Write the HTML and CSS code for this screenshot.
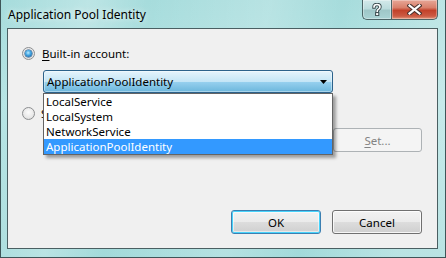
FILE: index.html
```html
<!DOCTYPE html>
<html>
<head>
<meta charset="utf-8">
<link rel="stylesheet" href="styles.css">
</head>
<body>
<div class="window">
  <div class="titlebar">
    <span class="title">Application Pool Identity</span>
    <div class="caption-buttons">
      <div class="cap help">
        <svg width="10" height="13" viewBox="0 0 10 13"><path d="M2 4 Q2 1.5 5 1.5 Q8 1.5 8 4 Q8 5.5 6.3 6.4 Q5.2 7 5.2 8.3" fill="none" stroke="#3a4a4e" stroke-width="3.4" stroke-linecap="square"/><path d="M2 4 Q2 1.5 5 1.5 Q8 1.5 8 4 Q8 5.5 6.3 6.4 Q5.2 7 5.2 8.3" fill="none" stroke="#fff" stroke-width="1.6" stroke-linecap="square"/><rect x="3.6" y="9.6" width="3.2" height="3" fill="#fff" stroke="#3a4a4e" stroke-width="1"/></svg>
      </div>
      <div class="cap close">
        <svg width="15" height="11" viewBox="0 0 15 11"><path d="M2.5 1.5 L12.5 9.5 M12.5 1.5 L2.5 9.5" stroke="#4a3430" stroke-width="4.2" stroke-linecap="square"/><path d="M2.5 1.5 L12.5 9.5 M12.5 1.5 L2.5 9.5" stroke="#fff" stroke-width="2.2" stroke-linecap="square"/></svg>
      </div>
    </div>
  </div>
  <div class="client">
    <div class="radio-row first">
      <span class="radio checked"></span>
      <span class="label"><u>B</u>uilt-in account:</span>
    </div>
    <div class="combo-wrap">
      <div class="combo">
        <span>ApplicationPoolIdentity</span>
        <svg class="arrow" width="7" height="4" viewBox="0 0 7 4"><path d="M0 0 H7 L3.5 4 Z" fill="#000"/></svg>
      </div>
      <ul class="list">
        <li>LocalService</li>
        <li>LocalSystem</li>
        <li>NetworkService</li>
        <li class="selected">ApplicationPoolIdentity</li>
      </ul>
    </div>
    <div class="radio-row second">
      <span class="radio"></span>
      <span class="label clipped"><u>S</u>pecific user:</span>
    </div>
    <div class="set-row">
      <div class="textbox"></div>
      <div class="btn disabled"><u>S</u>et...</div>
    </div>
    <div class="footer">
      <div class="btn default">OK</div>
      <div class="btn">Cancel</div>
    </div>
  </div>
</div>
</body>
</html>
```

FILE: styles.css
```css
* { box-sizing: border-box; }
html, body { margin: 0; padding: 0; }
body {
  width: 446px;
  height: 258px;
  overflow: hidden;
  font-family: "Noto Sans", "Open Sans", sans-serif;
  font-size: 11.5px;
  color: #000;
}
.window {
  width: 446px;
  height: 258px;
  border: 1px solid #3e5558;
  border-top: none;
  background:
    linear-gradient(100deg, rgba(255,255,255,0) 0%, rgba(255,255,255,0.25) 18%, rgba(255,255,255,0) 30%, rgba(255,255,255,0.2) 55%, rgba(255,255,255,0) 70%, rgba(255,255,255,0.25) 90%),
    linear-gradient(180deg, #a6dcdc 0%, #b3e3e3 40%, #a2dada 100%);
  display: flex;
  flex-direction: column;
  padding: 0 7px 8px 6px;
}
.titlebar {
  height: 28px;
  display: flex;
  align-items: flex-start;
  justify-content: space-between;
}
.title {
  margin: 7px 0 0 1px;
  font-size: 12px;
  line-height: 15px;
  color: #000;
  text-shadow: 0 0 6px rgba(255,255,255,0.9);
}
.caption-buttons {
  display: flex;
  height: 20px;
}
.cap {
  height: 20px;
  border: 1px solid #4c6466;
  border-top: none;
  display: flex;
  align-items: center;
  justify-content: center;
}
.help {
  width: 29px;
  border-right: none;
  border-bottom-left-radius: 5px;
  background: linear-gradient(180deg, #d3e9ea 0%, #bcdcdd 45%, #9fc7c8 55%, #a9d3d4 100%);
  box-shadow: inset 0 0 0 1px rgba(255,255,255,0.35);
}
.close {
  width: 47px;
  border-bottom-right-radius: 5px;
  background: linear-gradient(180deg, #e7a797 0%, #d9806b 40%, #c2412a 55%, #cc5b44 85%, #e39a80 100%);
  box-shadow: inset 0 0 0 1px rgba(255,255,255,0.3);
}
.client {
  flex: 1;
  background: #f0f0f0;
  border: 1px solid #4a5f62;
  display: flex;
  flex-direction: column;
  padding: 18px 15px 14px 14px;
}
.radio-row {
  display: flex;
  align-items: center;
  height: 13px;
}
.radio-row .label { margin-left: 7px; line-height: 13px; white-space: nowrap; }
.radio-row .label.clipped {
  margin-left: 6px;
  width: 2px;
  overflow: hidden;
}
.radio {
  width: 13px;
  height: 13px;
  border-radius: 50%;
  border: 1px solid #8c8e90;
  background: radial-gradient(circle at 50% 40%, #fcfcfc 0%, #e8e8e8 60%, #d4d4d4 100%);
  display: flex;
  align-items: center;
  justify-content: center;
  flex: none;
}
.radio.checked::after {
  content: "";
  width: 7px;
  height: 7px;
  border-radius: 50%;
  background: radial-gradient(circle at 45% 40%, #b9ecff 0%, #3fa2e0 45%, #0e4f8e 100%);
  box-shadow: 0 0 0 0.5px #1a4a78;
}
.combo-wrap {
  position: relative;
  margin: 10px 0 0 21px;
  width: 290px;
}
.combo {
  height: 23px;
  border: 1px solid #2c628b;
  border-radius: 3px;
  background: linear-gradient(180deg, #e5f4fc 0%, #c4e5f6 50%, #98d1ef 51%, #6cb6dc 100%);
  box-shadow: inset 0 0 0 1px rgba(255,255,255,0.4);
  display: flex;
  align-items: center;
  justify-content: space-between;
  padding: 0 5px 0 3px;
}
.combo span { line-height: 15px; }
.arrow { margin-top: 1px; }
.list {
  position: absolute;
  left: 0;
  top: 23px;
  width: 290px;
  margin: 0;
  padding: 0;
  list-style: none;
  background: #fff;
  border: 1px solid #646464;
  box-shadow: 3px 3px 3px rgba(0,0,0,0.35);
  z-index: 2;
}
.list li {
  height: 15px;
  line-height: 15px;
  padding-left: 2px;
}
.list li.selected {
  background: #3399ff;
  color: #fff;
}
.radio-row.second { margin-top: 14px; }
.set-row {
  display: flex;
  justify-content: space-between;
  margin-top: 8px;
  padding-left: 21px;
}
.textbox {
  width: 284px;
  height: 24px;
  border: 1px solid #adb2b5;
  background: #f0f0f0;
}
.btn {
  width: 90px;
  height: 24px;
  border: 1px solid #707070;
  border-radius: 3px;
  background: linear-gradient(180deg, #f2f2f2 0%, #ebebeb 48%, #dddddd 50%, #cfcfcf 100%);
  box-shadow: inset 0 0 0 1px rgba(255,255,255,0.8);
  display: flex;
  align-items: center;
  justify-content: center;
  line-height: 15px;
}
.btn.disabled {
  width: 89px;
  border-color: #adb2b5;
  background: #f4f4f4;
  color: #838383;
  box-shadow: none;
}
.btn.default {
  border-color: #3c7fb1;
  box-shadow: inset 0 0 0 1px #48d3fb, inset 0 0 0 2px rgba(255,255,255,0.5);
}
.footer {
  margin-top: auto;
  display: flex;
  justify-content: flex-end;
  gap: 11px;
}
u { text-decoration: underline; text-underline-offset: 2px; }
```
